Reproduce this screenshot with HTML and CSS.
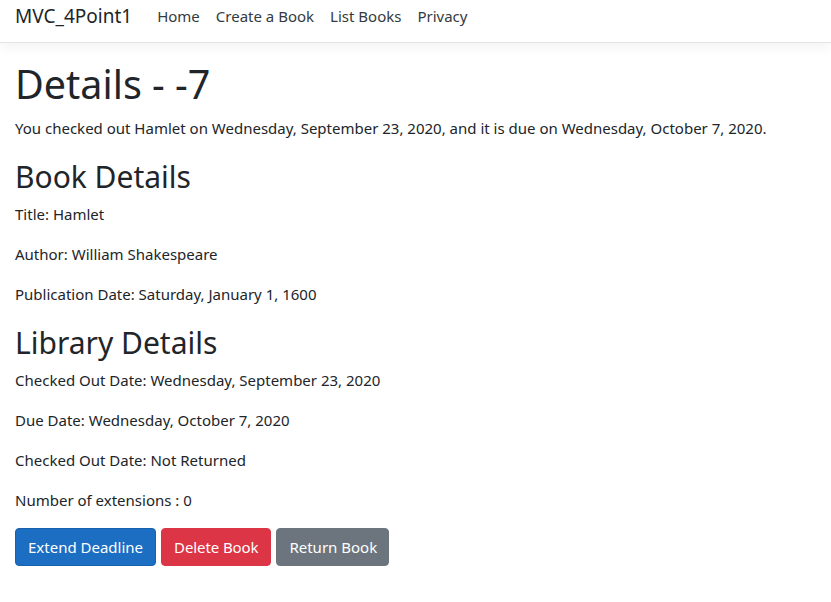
FILE: index.html
```html
<!DOCTYPE html>
<html lang="en">
<head>
<meta charset="utf-8">
<title>Details - MVC_4Point1</title>
<link rel="stylesheet" href="styles.css">
</head>
<body>
<header class="navbar">
  <a class="brand" href="#">MVC_4Point1</a>
  <nav class="nav">
    <a class="nav-link" href="#">Home</a>
    <a class="nav-link" href="#">Create a Book</a>
    <a class="nav-link" href="#">List Books</a>
    <a class="nav-link" href="#">Privacy</a>
  </nav>
</header>
<main class="main">
  <h1 class="h1">Details - -7</h1>
  <p class="p">You checked out Hamlet on Wednesday, September 23, 2020, and it is due on Wednesday, October 7, 2020.</p>
  <h3 class="h3">Book Details</h3>
  <p class="p">Title: Hamlet</p>
  <p class="p">Author: William Shakespeare</p>
  <p class="p">Publication Date: Saturday, January 1, 1600</p>
  <h3 class="h3">Library Details</h3>
  <p class="p">Checked Out Date: Wednesday, September 23, 2020</p>
  <p class="p">Due Date: Wednesday, October 7, 2020</p>
  <p class="p">Checked Out Date: Not Returned</p>
  <p class="p">Number of extensions : 0</p>
  <div class="actions">
    <button class="btn btn-primary">Extend Deadline</button>
    <button class="btn btn-danger">Delete Book</button>
    <button class="btn btn-secondary">Return Book</button>
  </div>
</main>
</body>
</html>
```
FILE: styles.css
```css
* { box-sizing: border-box; }
html, body { margin: 0; padding: 0; background: #fff; }
body {
  font-family: "Noto Sans", "Open Sans", sans-serif;
  font-size: 15px;
  line-height: 24px;
  color: #212529;
}
.navbar {
  display: flex;
  align-items: center;
  height: 43px;
  padding: 0 15px 10px;
  border-bottom: 1px solid #e5e5e5;
  box-shadow: 0 4px 12px rgba(0,0,0,.05);
}
.brand {
  font-size: 19px;
  line-height: 30px;
  color: #212529;
  text-decoration: none;
  margin-right: 17px;
}
.nav { display: flex; }
.nav-link {
  color: #343a40;
  text-decoration: none;
  padding: 0 8px;
}
.main { padding: 17px 15px 0; }
.h1 {
  font-size: 39.5px;
  font-weight: 400;
  line-height: 48px;
  margin: 0 0 8px;
}
.h3 {
  font-size: 30px;
  font-weight: 400;
  line-height: 34px;
  padding-top: 4px;
  margin: 0 0 8px;
}
.p { margin: 0 0 16px; }
.actions { display: flex; gap: 5px; }
.btn {
  font-family: inherit;
  font-size: 15px;
  line-height: 24px;
  padding: 6px 12px;
  border: 1px solid transparent;
  border-radius: 4px;
  color: #fff;
}
.btn-danger { letter-spacing: -0.1px; }
.btn-secondary { padding: 6px 11px 6px 12px; }
.btn-primary { background: #1b6ec2; border-color: #1861ac; }
.btn-danger { background: #dc3545; border-color: #dc3545; }
.btn-secondary { background: #6c757d; border-color: #6c757d; }
```
